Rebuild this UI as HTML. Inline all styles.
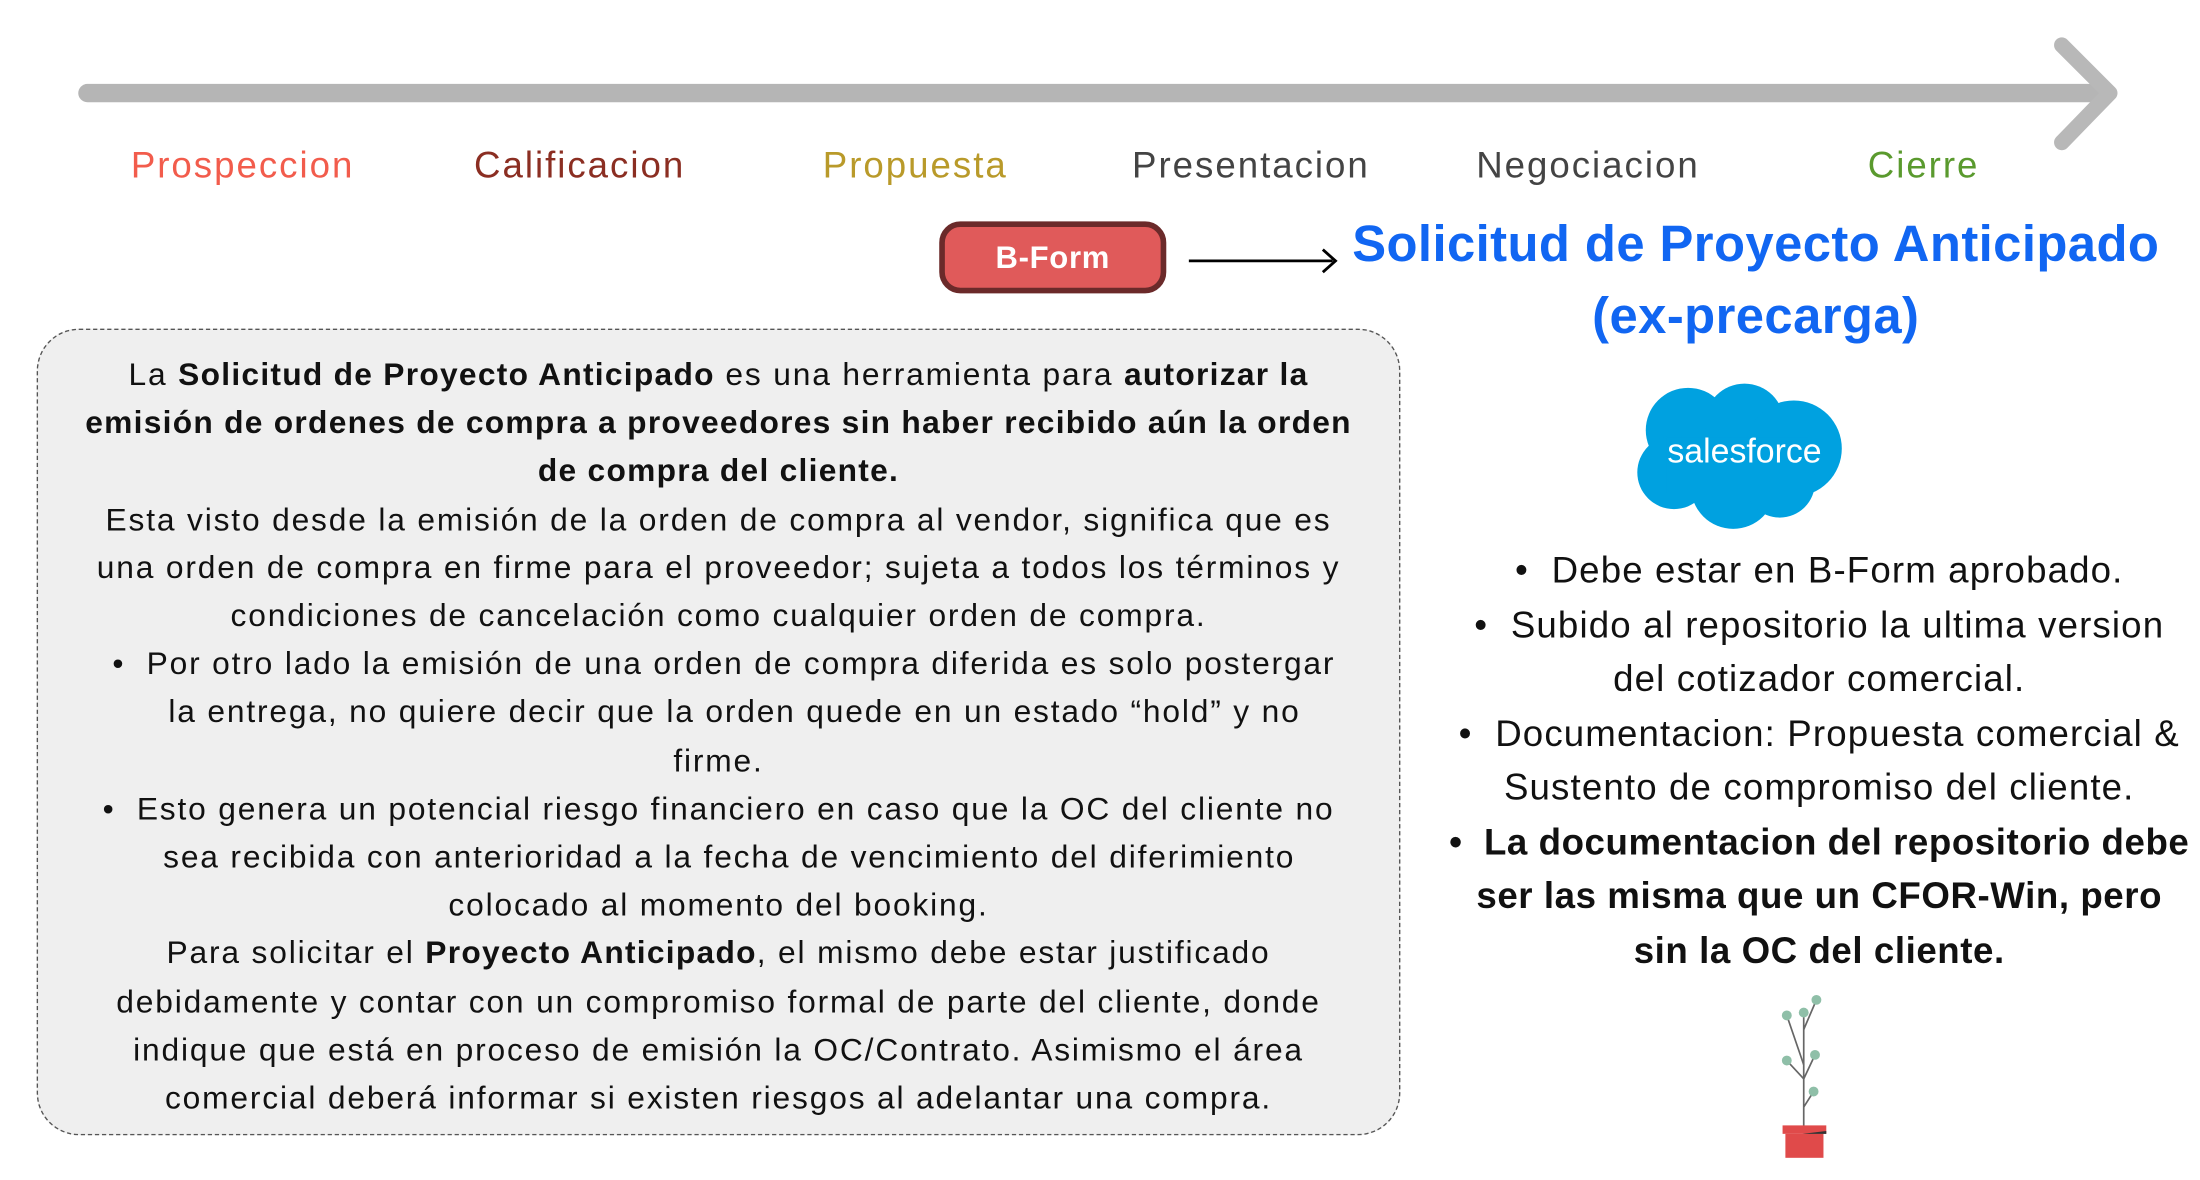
<!DOCTYPE html>
<html><head><meta charset="utf-8"><style>
html,body{margin:0;padding:0;background:#fff;width:2200px;height:1180px;overflow:hidden}
#w{position:absolute;left:0;top:0;width:1560px;height:837px;transform:scale(1.41026);transform-origin:0 0;font-family:"Liberation Sans",sans-serif}
.a{position:absolute;white-space:nowrap}
.lab{top:102px;font-size:26px;transform:translateX(-50%);letter-spacing:1.4px}
.box{position:absolute;left:26px;top:233px;width:967px;height:572px;background:#efefef;border:1.5px dashed #555;border-radius:30px;box-sizing:border-box}
.bt{position:absolute;left:26px;top:249px;width:967px;text-align:center;font-size:22.5px;line-height:34.2px;color:#111;letter-spacing:1.3px;white-space:nowrap}
.bt b{letter-spacing:0.9px}
.rt{position:absolute;left:1005px;top:385px;width:570px;text-align:center;font-size:26px;line-height:38.5px;color:#111;letter-spacing:0.8px;white-space:nowrap}
.rt b{letter-spacing:0.4px}
</style></head><body><div id="w">
<svg class="a" style="left:0;top:0" width="1560" height="837">
<line x1="62" y1="66" x2="1494" y2="66" stroke="#b5b5b5" stroke-width="13" stroke-linecap="round"/>
<polyline points="1462,32 1496,66 1462,101" fill="none" stroke="#b8b8b8" stroke-width="11" stroke-linecap="round" stroke-linejoin="round"/>
<line x1="843" y1="185" x2="945" y2="185" stroke="#000" stroke-width="2"/>
<polyline points="938,177 947,185 938,193" fill="none" stroke="#000" stroke-width="2"/>
</svg>
<div class="a lab" style="left:172px;color:#f25c4c">Prospeccion</div>
<div class="a lab" style="left:411px;color:#8b2e22">Calificacion</div>
<div class="a lab" style="left:649px;color:#b99a2a">Propuesta</div>
<div class="a lab" style="left:887px;color:#444">Presentacion</div>
<div class="a lab" style="left:1126px;color:#444">Negociacion</div>
<div class="a lab" style="left:1364px;color:#5a9a2e">Cierre</div>
<div class="a" style="left:666px;top:157px;width:161px;height:51px;box-sizing:border-box;background:#e05a5a;border:4px solid #6b2a2a;border-radius:15px;color:#fff;font-weight:bold;font-size:22px;line-height:43px;text-align:center;letter-spacing:.5px">B-Form</div>
<div class="a" style="left:945px;top:147px;width:600px;text-align:center;color:#1166f2;font-weight:bold;font-size:36px;line-height:51px;letter-spacing:.3px">Solicitud de Proyecto Anticipado<br>(ex-precarga)</div>
<div class="box"></div>
<div class="bt">La <b>Solicitud de Proyecto Anticipado</b> es una herramienta para <b>autorizar la</b><br><b>emisión de ordenes de compra a proveedores sin haber recibido aún la orden</b><br><b>de compra del cliente.</b><br>Esta visto desde la emisión de la orden de compra al vendor, significa que es<br>una orden de compra en firme para el proveedor; sujeta a todos los términos y<br>condiciones de cancelación como cualquier orden de compra.<br>&nbsp;•&nbsp; Por otro lado la emisión de una orden de compra diferida es solo postergar<br>&nbsp;&nbsp;&nbsp;la entrega, no quiere decir que la orden quede en un estado “hold” y no<br>firme.<br>•&nbsp; Esto genera un potencial riesgo financiero en caso que la OC del cliente no<br>&nbsp;&nbsp;sea recibida con anterioridad a la fecha de vencimiento del diferimiento<br>colocado al momento del booking.<br>Para solicitar el <b>Proyecto Anticipado</b>, el mismo debe estar justificado<br>debidamente y contar con un compromiso formal de parte del cliente, donde<br>indique que está en proceso de emisión la OC/Contrato. Asimismo el área<br>comercial deberá informar si existen riesgos al adelantar una compra.</div>
<svg class="a" style="left:1157px;top:270px" width="155" height="110">
<g fill="#00a1e0"><circle cx="40" cy="35" r="30"/><circle cx="80" cy="30" r="28"/><circle cx="115" cy="48" r="34"/><circle cx="30" cy="65" r="26"/><circle cx="72" cy="75" r="30"/><circle cx="105" cy="72" r="25"/><rect x="25" y="40" width="100" height="40"/></g>
<text x="80" y="58" text-anchor="middle" fill="#fff" font-family="Liberation Sans,sans-serif" font-size="24">salesforce</text>
</svg>
<div class="rt">•&nbsp; Debe estar en B-Form aprobado.<br>•&nbsp; Subido al repositorio la ultima version<br>del cotizador comercial.<br>•&nbsp; Documentacion: Propuesta comercial &amp;<br>Sustento de compromiso del cliente.<br><b>•&nbsp; La documentacion del repositorio debe</b><br><b>ser las misma que un CFOR-Win, pero</b><br><b>sin la OC del cliente.</b></div>
<svg class="a" style="left:1258px;top:700px" width="50" height="125">
<g stroke="#666" stroke-width="1.2" fill="none"><line x1="21" y1="101" x2="21" y2="18"/><line x1="21" y1="30" x2="30" y2="9"/><line x1="21" y1="55" x2="9" y2="20"/><line x1="21" y1="65" x2="9" y2="52"/><line x1="21" y1="65" x2="29" y2="48"/><line x1="21" y1="85" x2="28" y2="74"/></g>
<g fill="#8fbfa8"><circle cx="30" cy="9" r="3.5"/><circle cx="21" cy="18" r="3.5"/><circle cx="9" cy="20" r="3.5"/><circle cx="9" cy="52" r="3.5"/><circle cx="29" cy="48" r="3.5"/><circle cx="28" cy="74" r="3.5"/></g>
<rect x="6" y="98" width="31" height="6" fill="#e04a4a"/><rect x="8" y="104" width="27" height="17" fill="#e04a4a"/><polygon points="20,104 37,104 37,102" fill="#333"/>
</svg>
</div></body></html>
